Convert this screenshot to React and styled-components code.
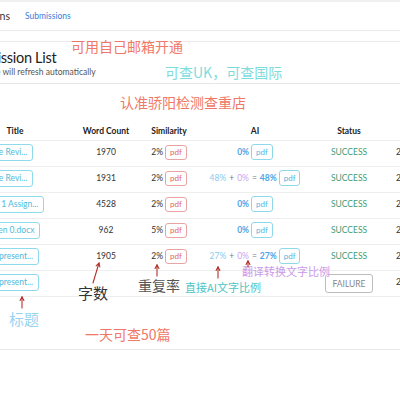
import React from 'react';
import styled, { createGlobalStyle } from 'styled-components';

const GlobalStyle = createGlobalStyle`
  html, body {
    margin: 0;
    padding: 0;
    background: #ffffff;
    overflow: hidden;
  }
  body {
    font-family: Lato, "Noto Sans", "Noto Sans CJK SC", sans-serif;
    color: #333;
  }
`;

const Page = styled.div`
  position: relative;
  width: 400px;
  height: 400px;
  overflow: hidden;
`;

const TopStrip = styled.div`
  height: 2px;
  background: #f0f0f0;
`;

const Nav = styled.nav`
  display: flex;
  align-items: center;
  height: 28px;
  border-bottom: 1px solid #ececec;
`;

const Brand = styled.div`
  display: flex;
  justify-content: flex-end;
  width: 10px;
  overflow: hidden;
  font-size: 10.5px;
  color: #333;
  white-space: nowrap;
`;

const NavLink = styled.a`
  margin-left: 15px;
  font-size: 8.5px;
  color: #3b7ddd;
  text-decoration: none;
`;

const Header = styled.header`
  margin-top: 10px;
  padding: 7px 0 5px;
  border-top: 1px solid #ececec;
  border-bottom: 1px solid #e6e6e6;
`;

const Heading = styled.h1`
  margin: 0 0 0 -37px;
  font-size: 14.5px;
  font-weight: 400;
  line-height: 17px;
  letter-spacing: -0.3px;
  color: #222;
  white-space: nowrap;
`;

const Sub = styled.div`
  margin: 1px 0 0 -35px;
  font-size: 8.5px;
  line-height: 11px;
  color: #555;
  white-space: nowrap;
`;

const Section = styled.section`
  margin-top: 38px;
  padding-bottom: 52px;
  border-bottom: 1px solid #e8e8e8;
`;

const Table = styled.table`
  margin-left: -36px;
  border-collapse: collapse;
  table-layout: fixed;
  width: 516px;
  font-size: 8.5px;
`;

const Th = styled.th`
  padding: 4px 0 3px;
  font-weight: 700;
  font-size: 8.5px;
  line-height: 11px;
  color: #222;
  text-align: center;
  border-bottom: 1px solid #eeeeee;
`;

const Td = styled.td`
  height: 25px;
  padding: 2px 0 5px;
  box-sizing: border-box;
  vertical-align: top;
  border-bottom: 1px solid #eeeeee;
  text-align: ${p => p.$align || 'center'};
`;

const Cell = styled.div`
  display: flex;
  align-items: center;
  justify-content: ${p => p.$justify || 'center'};
  gap: 2px;
  height: 18px;
  white-space: nowrap;
  color: #333;
`;

const TitleButton = styled.button`
  flex: none;
  height: 17px;
  padding: 0 5px;
  margin-left: ${p => p.$shift}px;
  border: 1px solid #8ddbeb;
  border-radius: 3px;
  background: #fff;
  color: #4fbad9;
  font-family: inherit;
  font-size: 8.5px;
  white-space: nowrap;
`;

const PdfButton = styled.button`
  height: ${p => (p.$tone === 'red' ? 15 : 16)}px;
  padding: 0 4px;
  border: 1px solid ${p => (p.$tone === 'red' ? '#eaa3a3' : '#8fd8ea')};
  border-radius: 3px;
  background: #fff;
  color: ${p => (p.$tone === 'red' ? '#e06666' : '#58b3dd')};
  font-family: inherit;
  font-size: 8px;
`;

const Pct = styled.span`
  color: ${p => p.$color};
  font-weight: ${p => (p.$bold ? 700 : 400)};
`;

const Op = styled.span`
  color: #777;
  margin: 0 1px;
`;

const Status = styled.span`
  color: #3f9b74;
`;

const FailButton = styled.button`
  flex: none;
  align-self: flex-start;
  height: 19px;
  margin-top: 1px;
  padding: 0 6px;
  border: 1px solid #bdbdbd;
  border-radius: 3px;
  background: #fff;
  color: #888;
  font-family: inherit;
  font-size: 8.5px;
`;

const DateText = styled.span`
  padding-left: 16px;
  color: #333;
`;

const Note = styled.span`
  position: absolute;
  left: ${p => p.$x}px;
  top: ${p => p.$y}px;
  font-family: "Noto Sans CJK SC", "Noto Sans", sans-serif;
  font-size: ${p => p.$size}px;
  line-height: 1;
  color: ${p => p.$color};
  white-space: nowrap;
`;

const Arrows = styled.svg`
  position: absolute;
  left: 0;
  top: 0;
  pointer-events: none;
`;

const rows = [
  { title: 'Literature Revi...', shift: -3, wc: '1970', sim: '2%', ai: 'single', status: 'ok' },
  { title: 'Literature Revi...', shift: -3, wc: '1931', sim: '2%', ai: ['48%', '0%', '48%'], status: 'ok' },
  { title: 'Unit 1 Assign...', shift: 13, wc: '4528', sim: '2%', ai: 'single', status: 'ok' },
  { title: 'Chapter Seven 0.docx', shift: -17, wc: '962', sim: '5%', ai: 'single', status: 'ok' },
  { title: 'Final present...', shift: 9, wc: '1905', sim: '2%', ai: ['27%', '0%', '27%'], status: 'ok' },
  { title: 'Final present...', shift: 9, wc: '', sim: '', ai: null, status: 'fail' }
];

function AiCell({ ai }) {
  if (!ai) return <Cell />;
  if (ai === 'single') {
    return (
      <Cell>
        <Pct $color="#4ea3e6" $bold>0%</Pct>
        <PdfButton>pdf</PdfButton>
      </Cell>
    );
  }
  return (
    <Cell>
      <Pct $color="#8ccaf0">{ai[0]}</Pct>
      <Op>+</Op>
      <Pct $color="#c9a3ee">{ai[1]}</Pct>
      <Op>=</Op>
      <Pct $color="#4ea3e6" $bold>{ai[2]}</Pct>
      <PdfButton>pdf</PdfButton>
    </Cell>
  );
}

function Arrow({ x1, y1, x2, y2 }) {
  const a = Math.atan2(y2 - y1, x2 - x1);
  const s = 4;
  const l = [x2 - s * Math.cos(a - 0.5), y2 - s * Math.sin(a - 0.5)];
  const r = [x2 - s * Math.cos(a + 0.5), y2 - s * Math.sin(a + 0.5)];
  return (
    <g stroke="#b0302a" strokeWidth="1.1" fill="none" strokeLinecap="round">
      <line x1={x1} y1={y1} x2={x2} y2={y2} />
      <polyline points={`${l[0]},${l[1]} ${x2},${y2} ${r[0]},${r[1]}`} />
    </g>
  );
}

export default function App() {
  return (
    <Page>
      <GlobalStyle />
      <TopStrip />
      <Nav>
        <Brand>
          <span>Submissions</span>
        </Brand>
        <NavLink>Submissions</NavLink>
      </Nav>
      <Header>
        <Heading>Submission List</Heading>
        <Sub>This page will refresh automatically</Sub>
      </Header>
      <Section>
        <Table>
          <colgroup>
            <col style={{ width: 102 }} />
            <col style={{ width: 80 }} />
            <col style={{ width: 46 }} />
            <col style={{ width: 126 }} />
            <col style={{ width: 62 }} />
            <col style={{ width: 100 }} />
          </colgroup>
          <thead>
            <tr>
              <Th>Title</Th>
              <Th>Word Count</Th>
              <Th>Similarity</Th>
              <Th>AI</Th>
              <Th>Status</Th>
              <Th>Created</Th>
            </tr>
          </thead>
          <tbody>
            {rows.map((r, i) => (
              <tr key={i}>
                <Td $align="left">
                  <Cell $justify="flex-start">
                    <TitleButton $shift={r.shift}>{r.title}</TitleButton>
                  </Cell>
                </Td>
                <Td>
                  <Cell>{r.wc}</Cell>
                </Td>
                <Td>
                  <Cell>
                    {r.sim && (
                      <>
                        <span>{r.sim}</span>
                        <PdfButton $tone="red">pdf</PdfButton>
                      </>
                    )}
                  </Cell>
                </Td>
                <Td>
                  <AiCell ai={r.ai} />
                </Td>
                <Td>
                  <Cell>
                    {r.status === 'ok' ? <Status>SUCCESS</Status> : <FailButton>FAILURE</FailButton>}
                  </Cell>
                </Td>
                <Td $align="left">
                  <Cell $justify="flex-start">
                    <DateText>2024-05-1{i}</DateText>
                  </Cell>
                </Td>
              </tr>
            ))}
          </tbody>
        </Table>
      </Section>

      <Note $x={71} $y={39} $size={14} $color="#ef7868">可用自己邮箱开通</Note>
      <Note $x={165} $y={65} $size={14} $color="#7edcdc">可查UK，可查国际</Note>
      <Note $x={120} $y={95} $size={14} $color="#ef7868">认准骄阳检测查重店</Note>
      <Note $x={78} $y={285} $size={15} $color="#333">字数</Note>
      <Note $x={138} $y={278} $size={14} $color="#555">重复率</Note>
      <Note $x={185} $y={282} $size={11} $color="#4cc4c4">直接AI文字比例</Note>
      <Note $x={242} $y={266} $size={11} $color="#c99ae8">翻译转换文字比例</Note>
      <Note $x={9} $y={311} $size={15} $color="#9ad3f0">标题</Note>
      <Note $x={85} $y={327} $size={14} $color="#ef7868">一天可查50篇</Note>

      <Arrows width="400" height="400" viewBox="0 0 400 400">
        <Arrow x1={93} y1={283} x2={99} y2={263} />
        <Arrow x1={157} y1={276} x2={157} y2={265} />
        <Arrow x1={218} y1={278} x2={218} y2={267} />
        <Arrow x1={248} y1={267} x2={248} y2={261} />
        <Arrow x1={22} y1={308} x2={22} y2={297} />
      </Arrows>
    </Page>
  );
}
